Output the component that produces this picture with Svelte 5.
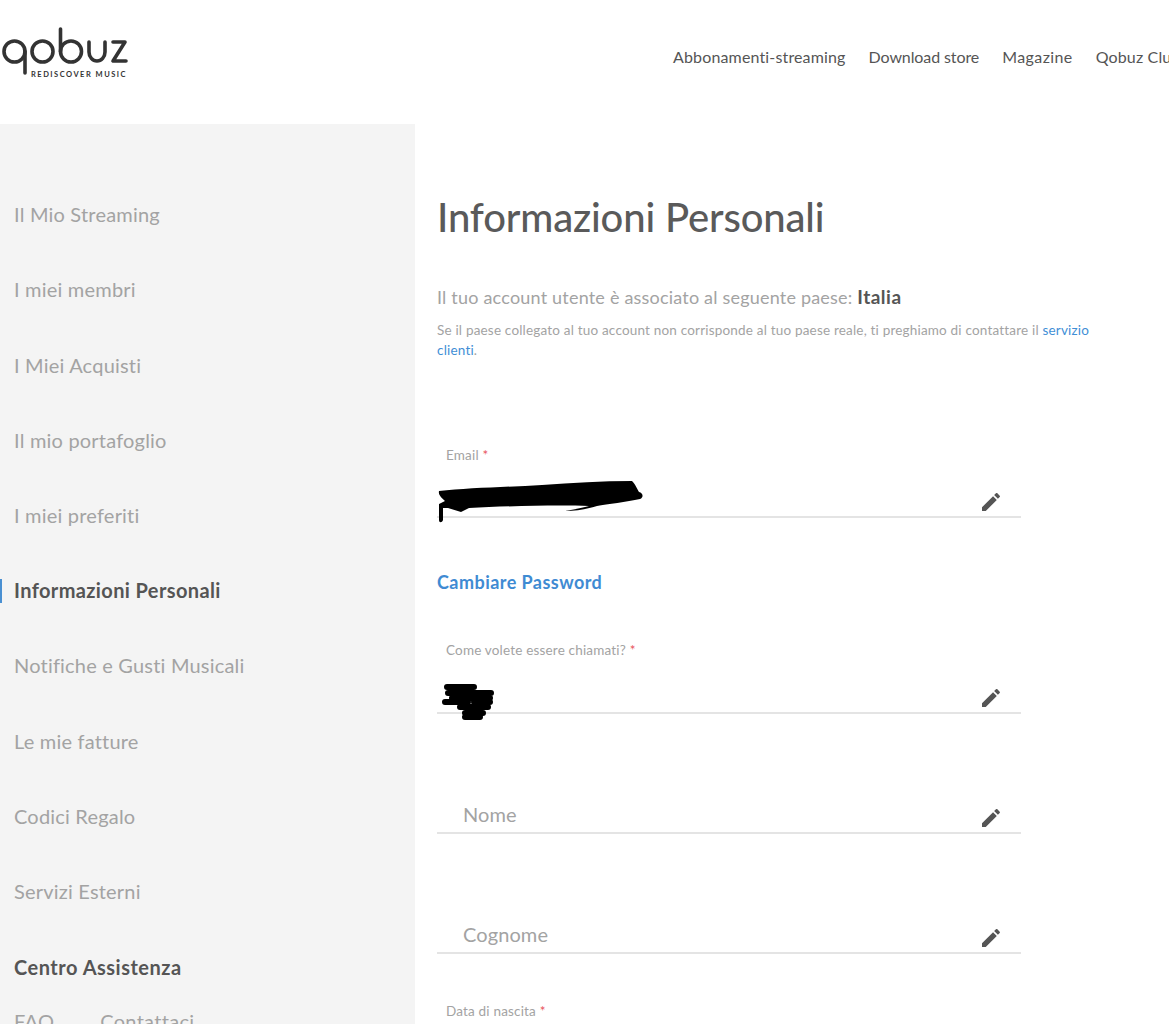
<script>
  const menu = ['Il Mio Streaming','I miei membri','I Miei Acquisti','Il mio portafoglio','I miei preferiti','Informazioni Personali','Notifiche e Gusti Musicali','Le mie fatture','Codici Regalo','Servizi Esterni'];
  const nav = ['Abbonamenti-streaming','Download store','Magazine','Qobuz Club'];
  const pencil = 'M3 17.25V21h3.75L17.81 9.94l-3.75-3.75L3 17.25zM20.71 7.04c.39-.39.39-1.02 0-1.41l-2.34-2.34c-.39-.39-1.02-.39-1.41 0l-1.83 1.83 3.75 3.75 1.83-1.83z';
</script>

<div class="page">
  <header class="top">
    <div class="logo">
      <svg class="mark" width="128" height="50" viewBox="0 0 128 50" aria-label="qobuz">
        <g fill="none" stroke="#333" stroke-width="3.6" stroke-linecap="round" stroke-linejoin="round">
          <circle cx="14.5" cy="25.5" r="10.5"/><path d="M25 25.5V47"/>
          <circle cx="42.5" cy="25.5" r="10.5"/>
          <circle cx="71" cy="25.5" r="10.5"/><path d="M60.5 25.5V3"/>
          <path d="M89 16V26a8 9 0 0 0 16 0V16"/>
          <path d="M113 16H125L113 35H126"/>
        </g>
      </svg>
      <span class="tag">REDISCOVER MUSIC</span>
    </div>
    <nav class="nav">
      {#each nav as n}<a href="#top">{n}</a>{/each}
    </nav>
  </header>

  <div class="body">
    <aside class="side">
      <ul class="menu">
        {#each menu as m, i}
          <li class:active={i === 5}>{m}</li>
        {/each}
      </ul>
      <h3 class="help">Centro Assistenza</h3>
      <div class="sublinks"><span>FAQ</span><span>Contattaci</span></div>
    </aside>

    <main class="main">
      <h1>Informazioni Personali</h1>
      <p class="country">Il tuo account utente è associato al seguente paese: <b>Italia</b></p>
      <p class="note">Se il paese collegato al tuo account non corrisponde al tuo paese reale, ti preghiamo di contattare il <a href="#top">servizio clienti</a>.</p>

      <div class="field email">
        <span class="label">Email <em>*</em></span>
        <div class="line">
          <svg class="scrib s1" width="210" height="44" viewBox="0 0 210 44">
            <path fill="#000" d="M2 11C30 8 70 7 105 5C135 3 165 1 195 1C199 5 200 9 202 12C206 13 207 17 203 19C190 22 170 24 160 26C150 29 140 31 128 31C138 29 146 28 152 26C120 25 70 26 32 28L24 32L11 28L6 28L6 40C5 43 2 43 2 40L2 24L8 21C5 18 1 15 2 11Z"/>
          </svg>
          <svg class="pen" width="24" height="24" viewBox="0 0 24 24"><path d={pencil}/></svg>
        </div>
      </div>

      <a class="pw" href="#top">Cambiare Password</a>

      <div class="field name">
        <span class="label">Come volete essere chiamati? <em>*</em></span>
        <div class="line">
          <svg class="scrib s2" width="60" height="42" viewBox="0 0 60 42">
            <path fill="none" stroke="#000" stroke-width="6" stroke-linecap="round" d="M9 6H36M10 12H53M14 17H52M7 21H30M36 21H52M22 26H50M27 32H45M27 36H42"/>
          </svg>
          <svg class="pen" width="24" height="24" viewBox="0 0 24 24"><path d={pencil}/></svg>
        </div>
      </div>

      <div class="field plain"><div class="line"><span class="ph">Nome</span><svg class="pen" width="24" height="24" viewBox="0 0 24 24"><path d={pencil}/></svg></div></div>
      <div class="field plain"><div class="line"><span class="ph">Cognome</span><svg class="pen" width="24" height="24" viewBox="0 0 24 24"><path d={pencil}/></svg></div></div>

      <div class="field dob"><span class="label">Data di nascita <em>*</em></span></div>
    </main>
  </div>
</div>

<style>
  :global(html), :global(body) { margin: 0; height: 100%; overflow: hidden; background: #fff; }
  .page { width: 1169px; height: 1024px; overflow: hidden; font-family: Lato, "Open Sans", sans-serif; color: #555; }
  .top { height: 124px; display: flex; align-items: flex-start; justify-content: space-between; box-sizing: border-box; }
  .logo { position: relative; width: 128px; margin-top: 26px; flex: none; }
  .mark { display: block; }
  .tag { position: absolute; left: 31px; top: 44px; font-size: 7.5px; font-weight: 700; letter-spacing: 1.5px; color: #333; white-space: nowrap; line-height: 9px; }
  .nav { display: flex; gap: 23px; margin-top: 46px; width: 496px; flex: none; white-space: nowrap; font-size: 16px; line-height: 22px; letter-spacing: .15px; }
  .nav a { color: #555; text-decoration: none; }
  .nav a:nth-child(2) { letter-spacing: -.1px; }
  .nav a:nth-child(3) { letter-spacing: .4px; }
  .body { display: flex; height: 900px; }
  .side { width: 415px; flex: none; background: #f4f4f4; box-sizing: border-box; padding-top: 53.2px; }
  .menu { list-style: none; margin: 0; padding: 0; }
  .menu li { height: 75.2px; line-height: 75.2px; padding-left: 14px; font-size: 20px; letter-spacing: .2px; color: #a3a3a3; position: relative; }
  .menu li.active { color: #555; font-weight: 700; letter-spacing: .38px; }
  .menu li.active::before { content: ''; position: absolute; left: 0; top: 26px; width: 2px; height: 24px; background: #4a90d2; }
  .help { margin: 0; padding: 25.3px 0 0 14px; font-size: 20px; font-weight: 700; letter-spacing: .5px; line-height: 26px; color: #555; }
  .sublinks { display: flex; gap: 46px; padding: 28px 0 0 14px; font-size: 20px; letter-spacing: .3px; line-height: 26px; color: #a3a3a3; }
  .main { flex: 1; min-width: 0; padding: 69px 0 0 22px; box-sizing: border-box; }
  h1 { margin: 0; font-size: 40px; letter-spacing: -.15px; line-height: 48px; font-weight: 500; color: #5a5a5a; }
  .country { margin: 44px 0 0; font-size: 18px; letter-spacing: .2px; line-height: 24px; color: #a3a3a3; }
  .country b { color: #555; font-size: 19px; letter-spacing: .5px; }
  .note { margin: 12px 0 0; width: 660px; font-size: 13.5px; letter-spacing: .19px; line-height: 19.5px; color: #a3a3a3; }
  .note a { color: #3f8fd6; text-decoration: none; }
  .field { width: 584px; }
  .label { display: block; padding-left: 9px; font-size: 13.5px; letter-spacing: .18px; line-height: 18px; color: #a3a3a3; }
  .label em { font-style: normal; color: #e8505b; }
  .line { position: relative; border-bottom: 2px solid #e4e4e4; box-sizing: border-box; display: flex; align-items: center; }
  .email { margin-top: 86px; }
  .email .line { height: 54px; }
  .pw { display: block; margin-top: 52px; font-size: 18px; letter-spacing: .45px; line-height: 24px; font-weight: 700; color: #3f8bd3; text-decoration: none; }
  .name { margin-top: 47px; }
  .name .line { height: 55px; }
  .plain { margin-top: 72px; }
  .plain .line { height: 48px; }
  .ph { padding: 10px 0 0 26px; font-size: 20px; letter-spacing: .1px; color: #a3a3a3; }
  .dob { margin-top: 48px; }
  .pen { position: absolute; right: 18px; bottom: 2px; fill: #555; }
  .scrib { position: absolute; }
  .s1 { left: 0; top: 16px; }
  .s2 { left: 1px; top: 22px; }
</style>
